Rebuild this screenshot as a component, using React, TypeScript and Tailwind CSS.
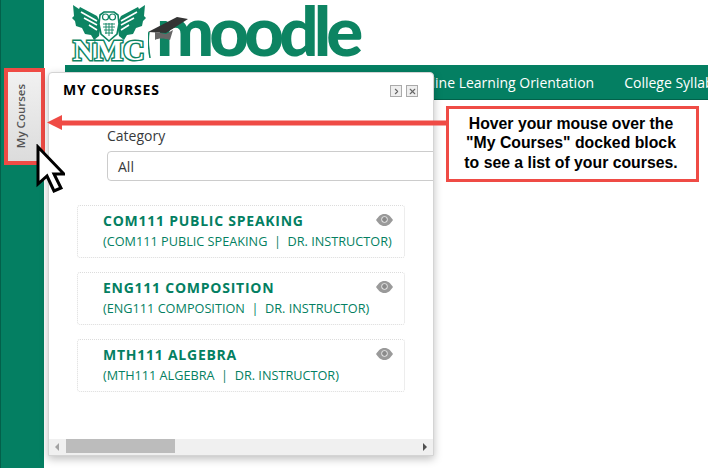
import { ChevronRight, X } from "lucide-react"

const courses = [
  { title: "COM111 PUBLIC SPEAKING", sub: "(COM111 PUBLIC SPEAKING  |  DR. INSTRUCTOR)" },
  { title: "ENG111 COMPOSITION", sub: "(ENG111 COMPOSITION  |  DR. INSTRUCTOR)" },
  { title: "MTH111 ALGEBRA", sub: "(MTH111 ALGEBRA  |  DR. INSTRUCTOR)" },
]

function Eye() {
  return (
    <svg width="17" height="12" viewBox="0 0 17 12" className="mt-[3px] shrink-0">
      <path d="M0 6C3 1.500 5.500 0 8.500 0S14 1.500 17 6c-3 4.500-5.500 6-8.500 6S3 10.500 0 6z" fill="#9a9a9a" />
      <circle cx="8.500" cy="5.500" r="3.200" fill="#e8e8e8" />
      <circle cx="8.500" cy="5.500" r="2.400" fill="#8a8a8a" />
    </svg>
  )
}

function Owl() {
  return (
    <svg width="76" height="38" viewBox="0 0 76 38" className="absolute left-[0px] top-[1px]">
      {/* wings */}
      <path d="M2 1l6 4 1-2 17 9 4 8-2 12-5 4-3-5-6-1-3-6-6-2-1-5-3-3 2-2z" fill="#0d8462" />
      <path d="M74 1l-6 4-1-2-17 9-4 8 2 12 5 4 3-5 6-1 3-6 6-2 1-5 3-3-2-2z" fill="#0d8462" />
      <path d="M10 8l16 9M13 14l13 7M18 21l8 5M66 8l-16 9M63 14l-13 7M58 21l-8 5" stroke="#fff" strokeWidth="1.600" />
      {/* body */}
      <path d="M29 11l4-3h10l4 3 1 9-2 10-8 7-8-7-2-10z" fill="#fff" stroke="#0d8462" strokeWidth="1.600" />
      <circle cx="34.500" cy="13" r="3" fill="none" stroke="#0d8462" strokeWidth="1.200" />
      <circle cx="41.500" cy="13" r="3" fill="none" stroke="#0d8462" strokeWidth="1.200" />
      <path d="M32 20h12M32 23h12M33 26h10M34 29h8M35 19v11M38 19v13M41 19v11" stroke="#0d8462" strokeWidth="0.900" />
    </svg>
  )
}

function Cap() {
  return (
    <svg width="42" height="50" viewBox="0 0 42 50" className="absolute left-[77px] top-[14px]">
      <path d="M0 15L29 0l11 2-22 14z" fill="#333" />
      <path d="M7 15l0 8c3-2 9-2 15 0l3-10-7 4z" fill="#666" />
      <path d="M1 15c-1 6-1 12 0 18 0 4 1 6 1 8" fill="none" stroke="#0d8462" strokeWidth="1.500" />
    </svg>
  )
}

function Cursor() {
  return (
    <svg width="30" height="50" viewBox="0 0 30 50" className="absolute left-[35px] top-[144px]">
      <path d="M3 3v37l9-8 7 15 7-3-7-14h10z" fill="#fff" stroke="#000" strokeWidth="3" strokeLinejoin="miter" />
    </svg>
  )
}

function Arrow() {
  return (
    <svg width="400" height="16" viewBox="0 0 400 16" className="absolute left-[47px] top-[114px]">
      <path d="M0 8.500L15 1v5.500h385v5H15V16z" fill="#ef4b45" />
    </svg>
  )
}

export default function App() {
  return (
    <div className="relative flex h-[468px] w-[708px] overflow-hidden bg-white font-['Open_Sans',sans-serif]">
      {/* Left dock */}
      <aside className="h-full w-[44px] shrink-0 border-l border-[#03604a] bg-[#047f62] pl-[3px] pt-[68px]">
        <div className="flex h-[97px] w-[41px] items-center justify-center border-[4px] border-[#ef4b45] bg-gradient-to-b from-[#f1f1f1] to-[#dcdcdc] pr-[8px]">
          <span className="rotate-180 text-[11.500px] font-semibold text-[#555] [writing-mode:vertical-rl]">My Courses</span>
        </div>
      </aside>

      {/* Page */}
      <main className="min-w-0 flex-1">
        {/* Logo */}
        <div className="relative ml-[27px] h-[65px]">
          <div className="absolute left-0 top-[3px] h-[60px] w-[295px]">
            <Owl />
            <span className="absolute left-[2px] top-[32px] font-['Liberation_Serif',serif] text-[30px] font-bold leading-none text-white [-webkit-text-stroke:3px_#0d8462] [paint-order:stroke_fill]">
              NMC
            </span>
            <span className="absolute left-[85px] top-[-18px] font-['Lato',sans-serif] text-[69px] font-black leading-[90px] tracking-[-4.900px] text-[#0d8462]">
              moodle
            </span>
            <Cap />
          </div>
        </div>

        {/* Nav */}
        <nav className="ml-[21px] flex h-[35px] items-center gap-[30px] overflow-hidden whitespace-nowrap border-b border-[#03604a] bg-[#047f62] pl-[347px] text-[14px] text-white">
          <span>Online Learning Orientation</span>
          <span className="shrink-0">College Syllabi</span>
        </nav>
      </main>

      {/* Docked block panel */}
      <section className="absolute left-[48px] top-[72px] flex h-[384px] w-[386px] flex-col overflow-hidden rounded-t-[4px] border border-[#d4d4d4] bg-white shadow-[0_3px_8px_rgba(0,0,0,0.25)]">
        <header className="flex h-[32px] items-center justify-between pl-[14px] pr-[15px] pt-[1px]">
          <h2 className="text-[14px] font-bold tracking-[0.8px] text-black">MY COURSES</h2>
          <div className="mt-[3px] flex gap-[4px]">
            <span className="flex h-[12px] w-[12px] items-center justify-center border border-[#aaa] bg-[#eee] text-[#666]">
              <ChevronRight size={9} strokeWidth={3} />
            </span>
            <span className="flex h-[12px] w-[12px] items-center justify-center border border-[#aaa] bg-[#eee] text-[#666]">
              <X size={9} strokeWidth={3} />
            </span>
          </div>
        </header>

        <div className="flex-1 overflow-hidden">
          <div className="pl-[58px] pt-[21px]">
            <label className="block text-[14px] leading-[20px] text-[#373a3c]">Category</label>
            <div className="mt-[5px] flex h-[30px] w-[360px] items-center rounded-[4px] border border-[#ccc] pl-[10px] text-[14px] text-[#373a3c]">
              All
            </div>
          </div>
          <ul className="ml-[28px] mt-[24px] flex w-[328px] flex-col gap-[14px]">
            {courses.map((c) => (
              <li key={c.title} className="h-[53px] rounded-[3px] border border-dotted border-[#dcdcdc] pl-[25px] pr-[11px] pt-[5px]">
                <div className="flex items-start justify-between">
                  <span className="text-[14px] font-bold leading-[19px] tracking-[0.75px] text-[#047f62]">{c.title}</span>
                  <Eye />
                </div>
                <div className="mt-[3px] whitespace-pre text-[12.700px] leading-[17px] text-[#047f62]">{c.sub}</div>
              </li>
            ))}
          </ul>
        </div>

        {/* Horizontal scrollbar */}
        <div className="flex h-[16px] items-center justify-between bg-[#f0f0f0] px-[6px]">
          <span className="h-0 w-0 border-y-[4px] border-r-[4px] border-y-transparent border-r-[#a3a3a3]" />
          <span className="h-0 w-0 border-y-[4px] border-l-[4px] border-y-transparent border-l-[#505050]" />
        </div>
        <div className="absolute bottom-[2px] left-[17px] h-[14px] w-[109px] bg-[#bcbcbc]" />
      </section>

      {/* Callout */}
      <div className="absolute left-[446px] top-[106px] flex h-[76px] w-[253px] flex-col items-center justify-center border-[3px] border-[#ef4b45] bg-white pb-[2px] pr-[3px] text-center font-['Liberation_Sans',sans-serif] text-[15.800px] font-bold leading-[19.500px] text-black">
        <span>Hover your mouse over the</span>
        <span>"My Courses" docked block</span>
        <span>to see a list of your courses.</span>
      </div>
      <Arrow />
      <Cursor />
    </div>
  )
}
